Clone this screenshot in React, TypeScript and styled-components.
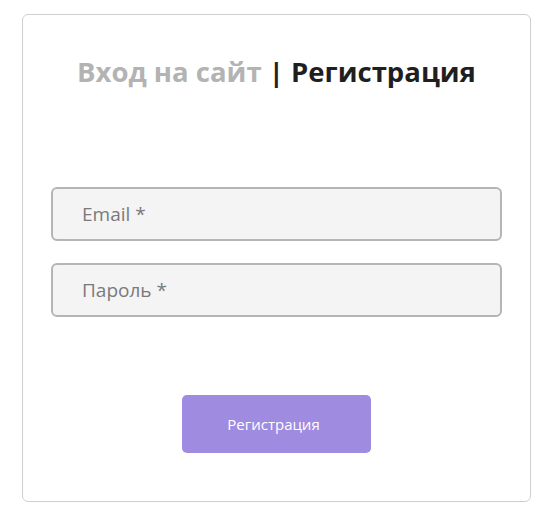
import React from "react";
import styled, { createGlobalStyle } from "styled-components";

const Global = createGlobalStyle`
  html, body { margin: 0; padding: 0; background: #fff; }
  body { font-family: "Open Sans", "Noto Sans", sans-serif; }
  * { box-sizing: border-box; }
`;

const Page = styled.div`
  padding: 14px 22px 16px 22px;
`;

const Card = styled.div`
  border: 1px solid #cfcfcf;
  border-radius: 6px;
  height: 488px;
  padding: 36px 28px 0 28px;
  display: flex;
  flex-direction: column;
  align-items: stretch;
`;

const Title = styled.h2`
  margin: 0;
  font-family: "Open Sans", sans-serif;
  font-weight: 700;
  font-size: 27.5px;
  line-height: 42px;
  text-align: center;
  color: #222;
`;

const Tab = styled.span<{ $active?: boolean }>`
  color: ${(p) => (p.$active ? "#1f1f1f" : "#b3b3b3")};
`;

const Form = styled.form`
  display: flex;
  flex-direction: column;
  gap: 22px;
  margin-top: 94px;
`;

const Input = styled.input`
  width: 100%;
  height: 54px;
  border: 2px solid #b5b5b5;
  border-radius: 6px;
  background: #f4f4f4;
  padding: 0 0 0 29px;
  font-family: "Open Sans", sans-serif;
  font-size: 19px;
  color: #333;
  outline: none;
  &::placeholder { color: #7a7a7a; }
`;

const Actions = styled.div`
  display: flex;
  justify-content: center;
  margin-top: 56px;
`;

const Button = styled.button`
  width: 189px;
  height: 58px;
  border: none;
  border-radius: 5px;
  background: #9f8be0;
  color: #fff;
  font-family: "Open Sans", sans-serif;
  font-size: 15px;
  padding: 0 6px 0 0;
  cursor: pointer;
`;

export default function App() {
  return (
    <>
      <Global />
      <Page>
        <Card>
          <Title>
            <Tab>Вход на сайт</Tab> | <Tab $active>Регистрация</Tab>
          </Title>
          <Form onSubmit={(e) => e.preventDefault()}>
            <Input type="email" placeholder="Email *" />
            <Input type="password" placeholder="Пароль *" />
            <Actions>
              <Button type="submit">Регистрация</Button>
            </Actions>
          </Form>
        </Card>
      </Page>
    </>
  );
}
